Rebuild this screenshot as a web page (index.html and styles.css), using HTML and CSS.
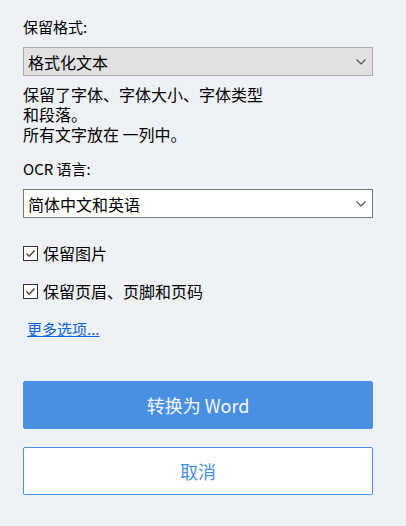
FILE: index.html
```html
<!DOCTYPE html>
<html lang="zh-CN">
<head>
<meta charset="utf-8">
<link rel="stylesheet" href="styles.css">
</head>
<body>
<div class="panel">
  <div class="label label-first">保留格式:</div>
  <div class="select select-gray">
    <span class="select-text">格式化文本</span>
    <svg class="chev" width="10" height="6" viewBox="0 0 10 6"><polyline points="0.5,0.5 5,5 9.5,0.5" fill="none" stroke="#555" stroke-width="1.2"/></svg>
  </div>
  <p class="desc">保留了字体、字体大小、字体类型<br>和段落。<br>所有文字放在 一列中。</p>
  <div class="label label-ocr">OCR 语言:</div>
  <div class="select select-white">
    <span class="select-text">简体中文和英语</span>
    <svg class="chev" width="10" height="6" viewBox="0 0 10 6"><polyline points="0.5,0.5 5,5 9.5,0.5" fill="none" stroke="#555" stroke-width="1.2"/></svg>
  </div>
  <label class="check check-first"><span class="box"><svg width="13" height="13" viewBox="0 0 13 13"><polyline points="2.5,6.5 5.2,9.2 10.5,3.5" fill="none" stroke="#444" stroke-width="1.4"/></svg></span>保留图片</label>
  <label class="check check-second"><span class="box"><svg width="13" height="13" viewBox="0 0 13 13"><polyline points="2.5,6.5 5.2,9.2 10.5,3.5" fill="none" stroke="#444" stroke-width="1.4"/></svg></span>保留页眉、页脚和页码</label>
  <a class="more" href="#">更多选项...</a>
  <button class="btn btn-primary">转换为 Word</button>
  <button class="btn btn-secondary">取消</button>
</div>
</body>
</html>
```
FILE: styles.css
```css
html, body {
  margin: 0;
  padding: 0;
  background: #eef1f5;
}
body {
  font-family: "Noto Sans CJK SC", "Noto Sans", sans-serif;
  color: #000;
  width: 406px;
  height: 526px;
  overflow: hidden;
}
.panel {
  display: flex;
  flex-direction: column;
  align-items: flex-start;
  padding: 17px 33px 0 23px;
}
.label {
  font-size: 15px;
  line-height: 20px;
  height: 20px;
}
.label-ocr {
  margin-top: 15px;
}
.select {
  box-sizing: border-box;
  width: 350px;
  height: 29px;
  margin-top: 10px;
  display: flex;
  align-items: center;
  justify-content: space-between;
  padding: 0 6px 0 4px;
  font-size: 16px;
}
.select-gray {
  background: #e1e1e1;
  border: 1px solid #adadad;
}
.select-white {
  background: #fff;
  border: 1px solid #7a7a7a;
}
.select-text {
  line-height: 20px;
}
.chev {
  display: block;
}
.desc {
  margin: 8px 0 0;
  font-size: 16px;
  line-height: 20px;
}
.check {
  display: flex;
  align-items: center;
  gap: 5px;
  font-size: 16px;
  line-height: 20px;
  height: 20px;
}
.check-first {
  margin-top: 25px;
}
.check-second {
  margin-top: 18px;
}
.box {
  box-sizing: border-box;
  width: 15px;
  height: 15px;
  border: 1px solid #333;
  background: #fff;
  display: flex;
  align-items: center;
  justify-content: center;
}
.box svg {
  display: block;
}
.more {
  margin: 18px 0 0 4px;
  font-size: 15px;
  line-height: 20px;
  color: #0a64d6;
  text-decoration: underline;
}
.btn {
  box-sizing: border-box;
  width: 350px;
  height: 48px;
  border-radius: 2px;
  font-family: "Noto Sans CJK SC", "Noto Sans", sans-serif;
  font-size: 18px;
  padding: 0;
  cursor: pointer;
}
.btn-primary {
  margin-top: 42px;
  background: #4a90e2;
  border: 1px solid #4a90e2;
  color: #f4f8fd;
}
.btn-secondary {
  margin-top: 18px;
  background: #fff;
  border: 1px solid #4a90e2;
  color: #4a90e2;
}
```
